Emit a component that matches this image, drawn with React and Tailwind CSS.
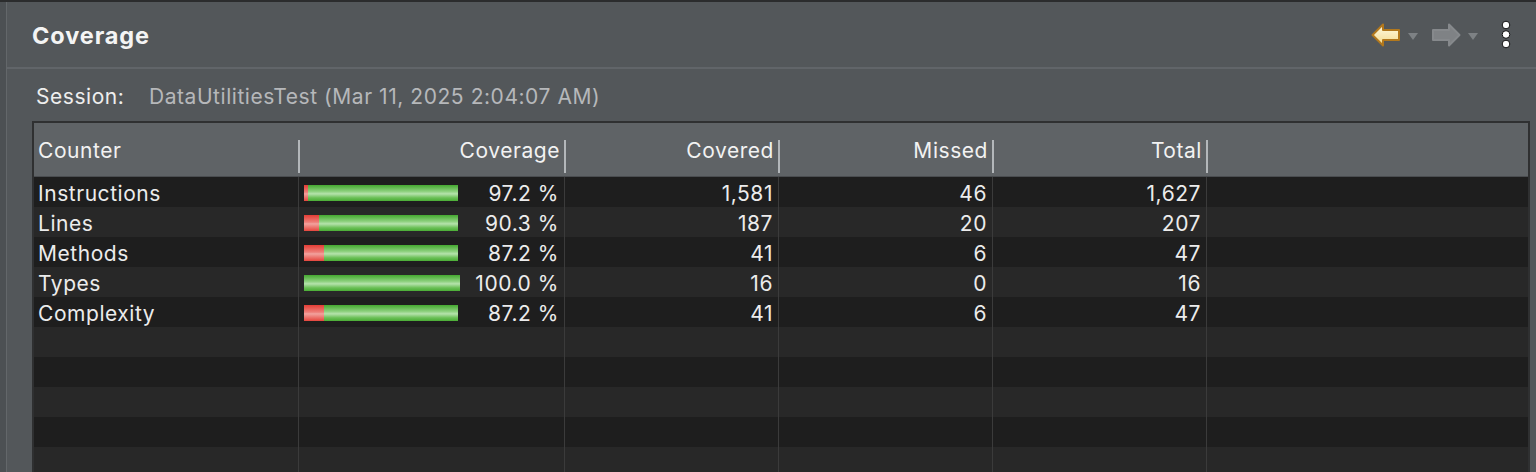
import React from 'react';

const rows = [
  { name: 'Instructions', pct: '97.2 %', ratio: 0.972, covered: '1,581', missed: '46', total: '1,627' },
  { name: 'Lines', pct: '90.3 %', ratio: 0.903, covered: '187', missed: '20', total: '207' },
  { name: 'Methods', pct: '87.2 %', ratio: 0.872, covered: '41', missed: '6', total: '47' },
  { name: 'Types', pct: '100.0 %', ratio: 1, covered: '16', missed: '0', total: '16' },
  { name: 'Complexity', pct: '87.2 %', ratio: 0.872, covered: '41', missed: '6', total: '47' },
];

const cols = 'grid grid-cols-[265px_266px_214px_214px_214px_1fr]';

function Bar({ ratio }) {
  const width = ratio === 1 ? 156 : 154;
  const red = Math.round((1 - ratio) * width);
  return (
    <div className="flex h-[16px]" style={{ width }}>
      {red > 0 && (
        <div
          className="h-full bg-[linear-gradient(to_bottom,#e33d35_0%,#ee7f7a_45%,#f2a29e_55%,#e5453d_100%)]"
          style={{ width: red }}
        />
      )}
      <div className="h-full flex-1 bg-[linear-gradient(to_bottom,#45a830_0%,#8dd07e_40%,#b5e2ac_55%,#6bbf57_80%,#4aad35_100%)]" />
    </div>
  );
}

function HeaderCell({ label, right }) {
  return (
    <div className="relative flex h-full items-center pt-[3px]">
      <span className={`flex-1 ${right ? 'text-right pr-[5px]' : 'pl-[4px]'}`}>{label}</span>
      <div className="absolute right-[-1px] top-[17px] h-[33px] w-[2px] bg-[#b3b7ba]" />
    </div>
  );
}

function Arrows() {
  return (
    <div className="flex items-center">
      <svg width="30" height="26" viewBox="0 0 30 26">
        <defs>
          <linearGradient id="bk" x1="0" y1="0" x2="0" y2="1">
            <stop offset="0" stopColor="#fffbe6" />
            <stop offset="1" stopColor="#f3d98a" />
          </linearGradient>
        </defs>
        <polygon points="1.5,13 12,2.5 12,8 28,8 28,18 12,18 12,23.5" fill="url(#bk)" stroke="#b2781d" strokeWidth="2" strokeLinejoin="round" />
      </svg>
      <svg width="12" height="10" viewBox="0 0 12 10" className="ml-[6px] mt-[4px]">
        <polygon points="1,1 11,1 6,8" fill="#7d8184" />
      </svg>
      <svg width="30" height="26" viewBox="0 0 30 26" className="ml-[12px]">
        <polygon points="28.5,13 18,2.5 18,8 2,8 2,18 18,18 18,23.5" fill="#7f8285" stroke="#86898c" strokeWidth="2" strokeLinejoin="round" />
      </svg>
      <svg width="12" height="10" viewBox="0 0 12 10" className="ml-[6px] mt-[4px]">
        <polygon points="1,1 11,1 6,8" fill="#7d8184" />
      </svg>
      <svg width="10" height="30" viewBox="0 0 10 30" className="ml-[22px]">
        <circle cx="5" cy="5" r="3.8" fill="#fff" stroke="#111" strokeWidth="1" />
        <circle cx="5" cy="14.5" r="3.8" fill="#fff" stroke="#111" strokeWidth="1" />
        <circle cx="5" cy="24" r="3.8" fill="#fff" stroke="#111" strokeWidth="1" />
      </svg>
    </div>
  );
}

export default function App() {
  const empties = Array.from({ length: 5 });
  return (
    <div
      className="flex h-[472px] w-[1536px] overflow-hidden border-t-2 border-[#2b2c2d] bg-[#53575a] text-[21px] tracking-[0.55px] text-[#ececec]"
      style={{ fontFamily: 'Inter, "Liberation Sans", sans-serif' }}
    >
      <div className="w-[7px] shrink-0 border-r border-[#63676a] bg-[#4c5053]" />
      <div className="flex min-w-0 flex-1 flex-col">
        {/* Title bar */}
        <div className="flex h-[67px] shrink-0 items-center justify-between border-b-2 border-[#616569] pl-[25px] pr-[25px]">
          <span className="pt-[2px] text-[23.5px] font-bold tracking-[0.9px] text-[#f4f4f4]">Coverage</span>
          <Arrows />
        </div>

        {/* Session */}
        <div className="flex h-[52px] shrink-0 items-center pl-[29px] pt-[3px]">
          <span className="w-[113px] text-[#eeeeee]">Session:</span>
          <span className="text-[#b6b8ba]">DataUtilitiesTest (Mar 11, 2025 2:04:07 AM)</span>
        </div>

        {/* Table */}
        <div className="ml-[25px] mr-[6px] flex-1 border-l-2 border-r-2 border-t-2 border-[#2f3031]">
          <div className={`${cols} h-[54px] border-b border-[#4a4d50] bg-[#5f6366] text-[#f2f2f2]`}>
            <HeaderCell label="Counter" />
            <HeaderCell label="Coverage" right />
            <HeaderCell label="Covered" right />
            <HeaderCell label="Missed" right />
            <HeaderCell label="Total" right />
            <div />
          </div>
          {rows.map((r, i) => (
            <div key={r.name} className={`${cols} h-[30px] ${i % 2 === 0 ? 'bg-[#1e1e1e]' : 'bg-[#282828]'}`}>
              <div className="flex items-center border-r border-[#3b3b3b] pl-[4px] pt-[1px]">{r.name}</div>
              <div className="flex items-center justify-between border-r border-[#3b3b3b] pl-[5px] pr-[5px]">
                <Bar ratio={r.ratio} />
                <span className="pt-[1px]">{r.pct}</span>
              </div>
              <div className="flex items-center justify-end border-r border-[#3b3b3b] pr-[5px] pt-[1px]">{r.covered}</div>
              <div className="flex items-center justify-end border-r border-[#3b3b3b] pr-[5px] pt-[1px]">{r.missed}</div>
              <div className="flex items-center justify-end border-r border-[#3b3b3b] pr-[5px] pt-[1px]">{r.total}</div>
              <div />
            </div>
          ))}
          {empties.map((_, i) => (
            <div key={i} className={`${cols} h-[30px] ${i % 2 === 0 ? 'bg-[#282828]' : 'bg-[#1e1e1e]'}`}>
              <div className="border-r border-[#3b3b3b]" />
              <div className="border-r border-[#3b3b3b]" />
              <div className="border-r border-[#3b3b3b]" />
              <div className="border-r border-[#3b3b3b]" />
              <div className="border-r border-[#3b3b3b]" />
              <div />
            </div>
          ))}
        </div>
      </div>
    </div>
  );
}
